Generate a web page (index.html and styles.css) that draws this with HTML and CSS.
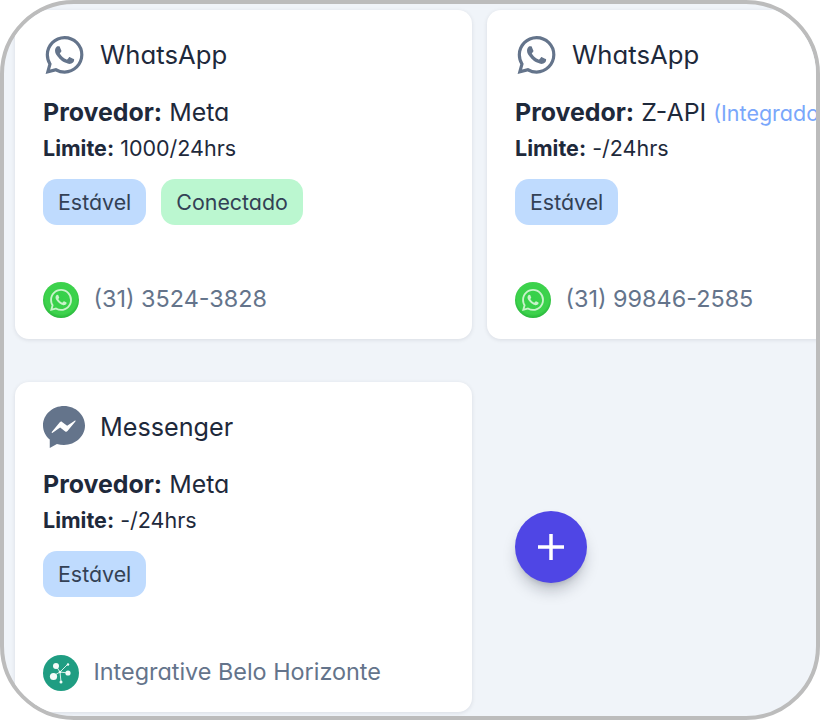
FILE: index.html
```html
<!DOCTYPE html>
<html lang="pt-BR">
<head>
  <meta charset="UTF-8">
  <title>Canais</title>
  <link rel="stylesheet" href="styles.css">
</head>
<body>
  <svg class="icon-defs" aria-hidden="true">
    <symbol id="wa" viewBox="0 0 24 24">
      <path d="M17.472 14.382c-.297-.149-1.758-.867-2.03-.967-.273-.099-.471-.148-.67.15-.197.297-.767.966-.94 1.164-.173.199-.347.223-.644.075-.297-.15-1.255-.463-2.39-1.475-.883-.788-1.48-1.761-1.653-2.059-.173-.297-.018-.458.13-.606.134-.133.298-.347.446-.52.149-.174.198-.298.298-.497.099-.198.05-.371-.025-.52-.075-.149-.669-1.612-.916-2.207-.242-.579-.487-.5-.669-.51-.173-.008-.371-.01-.57-.01-.198 0-.52.074-.792.372-.272.297-1.04 1.016-1.04 2.479 0 1.462 1.065 2.875 1.213 3.074.149.198 2.096 3.2 5.077 4.487.709.306 1.262.489 1.694.625.712.227 1.36.195 1.871.118.571-.085 1.758-.719 2.006-1.413.248-.694.248-1.289.173-1.413-.074-.124-.272-.198-.57-.347m-5.421 7.403h-.004a9.87 9.87 0 01-5.031-1.378l-.361-.214-3.741.982.998-3.648-.235-.374a9.86 9.86 0 01-1.51-5.26c.001-5.45 4.436-9.884 9.888-9.884 2.64 0 5.122 1.03 6.988 2.898a9.825 9.825 0 012.893 6.994c-.003 5.45-4.437 9.884-9.885 9.884m8.413-18.297A11.815 11.815 0 0012.05 0C5.495 0 .16 5.335.157 11.892c0 2.096.547 4.142 1.588 5.945L.057 24l6.305-1.654a11.882 11.882 0 005.683 1.448h.005c6.554 0 11.89-5.335 11.893-11.893a11.821 11.821 0 00-3.48-8.413Z"/>
    </symbol>
    <symbol id="wa-round" viewBox="0 0 36 36">
      <circle cx="18" cy="18" r="18" fill="url(#wa-green)"/>
      <use href="#wa" x="7" y="7" width="22" height="22" class="wa-white"/>
    </symbol>
    <radialGradient id="wa-green" cx="0.5" cy="0.45" r="0.55">
      <stop offset="0" stop-color="#35d04a"/>
      <stop offset="0.8" stop-color="#3dd24c"/>
      <stop offset="1" stop-color="#27b63a"/>
    </radialGradient>
  </svg>

  <main class="frame">
    <div class="grid">
      <article class="card">
        <header class="card-head">
          <svg class="channel-icon"><use href="#wa"/></svg>
          <h2>WhatsApp</h2>
        </header>
        <p class="provider"><strong>Provedor:</strong> Meta</p>
        <p class="limit"><strong>Limite:</strong> 1000/24hrs</p>
        <div class="badges">
          <span class="badge blue">Estável</span>
          <span class="badge green">Conectado</span>
        </div>
        <footer class="card-foot">
          <svg class="foot-icon"><use href="#wa-round"/></svg>
          <span>(31) 3524-3828</span>
        </footer>
      </article>

      <article class="card">
        <header class="card-head">
          <svg class="channel-icon"><use href="#wa"/></svg>
          <h2>WhatsApp</h2>
        </header>
        <p class="provider"><strong>Provedor:</strong> Z-API <span class="note">(Integrado)</span></p>
        <p class="limit"><strong>Limite:</strong> -/24hrs</p>
        <div class="badges">
          <span class="badge blue">Estável</span>
        </div>
        <footer class="card-foot">
          <svg class="foot-icon"><use href="#wa-round"/></svg>
          <span>(31) 99846-2585</span>
        </footer>
      </article>

      <article class="card">
        <header class="card-head">
          <svg class="channel-icon messenger" viewBox="0 0 24 24">
            <path d="M12 0C5.37 0 0 4.97 0 11.1c0 3.2 1.47 6.05 3.86 8.05V24l4.1-2.25c1.27.35 2.62.55 4.04.55 6.63 0 12-4.97 12-11.1S18.63 0 12 0z"/>
            <path class="bolt" d="M5 14.9l4.6-5.6c.4-.5.9-.5 1.3-.2l2.9 2.2 4.3-2.9c.4-.3.7.1.4.4l-4.5 5.5c-.4.5-.9.5-1.3.2l-2.9-2.2-4.3 3c-.4.3-.7-.1-.5-.4z"/>
          </svg>
          <h2>Messenger</h2>
        </header>
        <p class="provider"><strong>Provedor:</strong> Meta</p>
        <p class="limit"><strong>Limite:</strong> -/24hrs</p>
        <div class="badges">
          <span class="badge blue">Estável</span>
        </div>
        <footer class="card-foot">
          <svg class="foot-icon" viewBox="0 0 36 36">
            <circle cx="18" cy="18" r="18" fill="#1f9d82"/>
            <g stroke="#d5efe8" stroke-width="1" fill="none">
              <path d="M17 17L13 11M17 17L10 21M17 17L25 18M17 17L25 9M17 17L18 27"/>
            </g>
            <g fill="#f2fbf8">
              <circle cx="13" cy="11" r="3"/>
              <circle cx="10.5" cy="21.5" r="3.6"/>
              <circle cx="25" cy="18" r="2.6"/>
              <circle cx="25" cy="9.5" r="1.2"/>
              <circle cx="18" cy="27" r="1.5"/>
              <circle cx="17" cy="17" r="1.3"/>
            </g>
          </svg>
          <span>Integrative Belo Horizonte</span>
        </footer>
      </article>

      <button type="button" class="fab" aria-label="Adicionar">
        <svg viewBox="0 0 26 26"><path d="M13 0v26M0 13h26"/></svg>
      </button>
    </div>
  </main>
</body>
</html>
```

FILE: styles.css
```css
* {
  box-sizing: border-box;
}
html, body {
  margin: 0;
  background: #fff;
}
body {
  width: 820px;
  height: 720px;
  font-family: Inter, "Noto Sans", sans-serif;
  font-feature-settings: "cv11" 1;
  color: #1e293b;
}
.icon-defs {
  position: absolute;
  width: 0;
  height: 0;
}
.frame {
  width: 820px;
  height: 720px;
  border: 4px solid #bcbcbc;
  border-radius: 74px;
  background: #f0f4f9;
  overflow: hidden;
  padding: 6px 0 0 10.5px;
}
.grid {
  display: grid;
  grid-template-columns: 457.5px 458px;
  grid-template-rows: 329px 330px;
  column-gap: 14.5px;
  row-gap: 43px;
}
.card {
  display: flex;
  flex-direction: column;
  align-items: flex-start;
  padding: 26px 28.5px 21px;
  background: #fff;
  border-radius: 14px;
  box-shadow: 0 1px 4px rgba(15, 23, 42, 0.1);
}
.card-head {
  display: flex;
  align-items: center;
  gap: 16px;
  height: 38px;
  margin-bottom: 20px;
}
.card-head h2 {
  margin: 0;
  font-size: 25.7px;
  font-weight: 400;
  line-height: 40px;
}
.channel-icon {
  width: 39px;
  height: 38px;
  margin-left: 2px;
  fill: #64748b;
}
.channel-icon.messenger {
  width: 42px;
  height: 42px;
  margin-left: 0;
}
.messenger + h2 {
  margin-left: -1px;
  font-size: 25.2px;
}
.bolt {
  fill: #fff;
}
.wa-white {
  fill: #c9f3cb;
}
.provider {
  margin: 0;
  font-size: 24.9px;
  line-height: 37px;
  white-space: nowrap;
}
.limit {
  margin: 0;
  font-size: 21.5px;
  line-height: 34px;
  white-space: nowrap;
}
.note {
  font-size: 21.5px;
  line-height: 1;
  color: #7aa7fb;
}
.badges {
  display: flex;
  gap: 15px;
  margin-top: 14px;
}
.badge {
  display: block;
  padding: 0 15px;
  font-size: 21.4px;
  line-height: 46px;
  border-radius: 14px;
  color: #334155;
}
.blue {
  background: #bfdbfe;
}
.green {
  background: #bbf7d0;
}
.card-foot {
  display: flex;
  align-items: center;
  gap: 14.5px;
  margin-top: auto;
  font-size: 23.4px;
  line-height: 34px;
  color: #64748b;
}
.card-foot span {
  margin-bottom: 2px;
}
.foot-icon {
  width: 36px;
  height: 36px;
}
.fab {
  align-self: center;
  justify-self: start;
  display: flex;
  align-items: center;
  justify-content: center;
  width: 72px;
  height: 72px;
  margin-left: 28.5px;
  padding: 0;
  border: none;
  border-radius: 50%;
  background: #4f46e5;
  box-shadow: 0 10px 15px -3px rgba(15, 23, 42, 0.25), 0 4px 6px -4px rgba(15, 23, 42, 0.2);
}
.fab svg {
  width: 26px;
  height: 26px;
  stroke: #fff;
  stroke-width: 3.5;
  fill: none;
}
```
